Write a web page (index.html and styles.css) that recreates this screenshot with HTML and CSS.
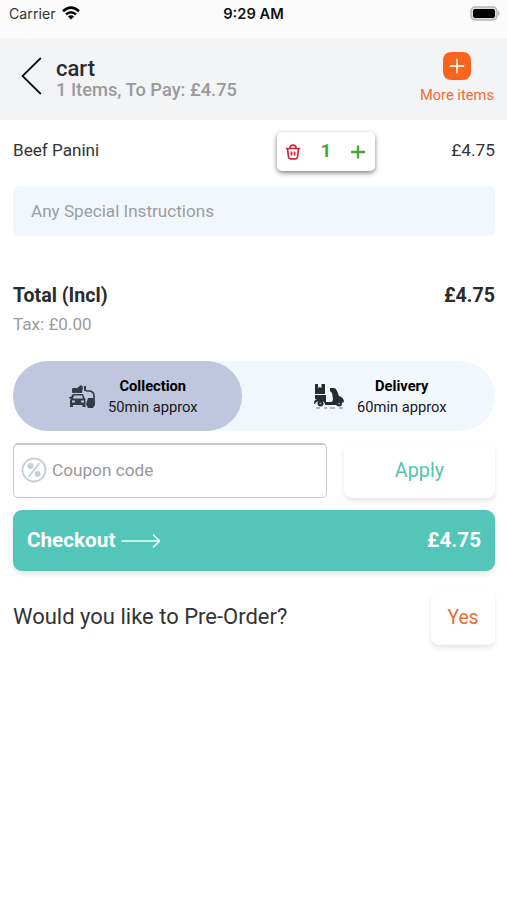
FILE: index.html
```html
<!DOCTYPE html>
<html lang="en">
<head>
<meta charset="utf-8">
<title>cart</title>
<link rel="stylesheet" href="styles.css">
</head>
<body>
<div class="status">
  <div class="carrier"><span>Carrier</span>
    <svg width="18" height="14" viewBox="0 0 18 14" fill="none" stroke="#000" stroke-width="2.5"><path d="M1 5.2Q9-2 17 5.2M4 8.4Q9 4 14 8.4"/><path d="M9 13.6L5.9 10.6Q9 8 12.1 10.6Z" fill="#000" stroke="none"/></svg>
  </div>
  <div class="clock">9:29 AM</div>
  <svg class="battery" width="31" height="15" viewBox="0 0 31 15"><rect x="1" y="1" width="26" height="13" rx="4" fill="#ddd" stroke="#b5b5b5" stroke-width="1.4"/><rect x="3" y="3" width="22" height="9" rx="2" fill="#000"/><path d="M28.3 5q2.4 2.5 0 5z" fill="#999"/></svg>
</div>
<header class="header">
  <svg class="back" width="22" height="38" viewBox="0 0 22 38" fill="none" stroke="#111" stroke-width="1.8"><path d="M19.8 1L1.5 19L19.8 37"/></svg>
  <div class="heading"><h1>cart</h1><p>1 Items, To Pay: £4.75</p></div>
  <div class="more">
    <svg width="28" height="28" viewBox="0 0 28 28"><rect width="28" height="28" rx="8" fill="#f7641e"/><path d="M14 7.5v13M7.5 14h13" stroke="#ffe9dd" stroke-width="1.8" stroke-linecap="round"/></svg>
    <span>More items</span>
  </div>
</header>
<main>
  <div class="item">
    <span class="item-name">Beef Panini</span>
    <div class="stepper">
      <svg width="16" height="16" viewBox="0 0 16 16" fill="none" stroke="#d32839" stroke-width="1.7" stroke-linejoin="round"><path d="M.8 4.500h14.400M2.500 4.500l1 8.500q.2 1.800 2 1.800h5q1.800 0 2-1.800l1-8.500M4.800 4.200Q5 1.200 8 1.200t3.200 3M6.500 7.500v4M9.500 7.500v4"/></svg>
      <b>1</b>
      <svg width="14" height="14" viewBox="0 0 14 14" stroke="#4da63c" stroke-width="2.400"><path d="M7 .5v13M0 7h14"/></svg>
    </div>
    <span class="item-price">£4.75</span>
  </div>
  <div class="notes">Any Special Instructions</div>
  <div class="total"><span class="total-label">Total (Incl)</span><span>£4.75</span></div>
  <div class="tax">Tax: £0.00</div>
  <div class="modes">
    <div class="mode selected">
      <svg width="27" height="25" viewBox="0 0 27 25"><g fill="#343a49"><rect x="3" y="4" width="5" height="5" rx="1"/><path d="M8 4l4-3 2 2-1 6H8zM15 2h2v5h-2z"/><path fill-rule="evenodd" d="M5 10h8q1 0 1.500 1l1 3 1 1v8h-3v-2H4v2H1v-7l1-1-2-1v-1h2l1-2q.5-1 2-1zM5 11.500l-1 3h10l-1-3zM3 16.500v2h3v-2zM12 16.500v2h3v-2z"/><path d="M19 14h5l2 3v4l-2 3h-5l-2-4z"/></g><path d="M17 7h4q4 1 4 5v5" fill="none" stroke="#343a49" stroke-width="1.600"/></svg>
      <div class="mode-text"><b>Collection</b><span>50min approx</span></div>
    </div>
    <div class="mode">
      <svg width="30" height="25" viewBox="0 0 30 25"><g fill="#272c33"><path d="M1 0h3v4l1.800-1 1.700 1V0H11v10H1zM1 11h11v4H1z"/><path d="M0 20q0-5 4-5h8v3h5q2 0 2-3l-1-6-2-2V4h4q2 0 3 3l2 5q4 1 5 5l-1 2q-2-2-4-1-2 1-2 3H11q0-4-4-4-5 0-6 3z"/><circle cx="6.500" cy="19.500" r="3"/><circle cx="25" cy="19.500" r="3"/></g><g fill="#8d949c"><circle cx="6.500" cy="19.500" r="1"/><circle cx="25" cy="19.500" r="1"/></g><path d="M2 24h4m4 0h3m3 0h5m4 0h4" stroke="#737981" stroke-width="1"/></svg>
      <div class="mode-text"><b>Delivery</b><span>60min approx</span></div>
    </div>
  </div>
  <div class="coupon-row">
    <div class="coupon">
      <svg width="26" height="26" viewBox="0 0 26 26" fill="none" stroke="#c5ced2" stroke-width="1.800"><circle cx="13" cy="13" r="11.500"/><path d="M18.500 6L7.500 20"/><g fill="#c5ced2" stroke="none"><circle cx="9.500" cy="9" r="2.900"/><circle cx="16.500" cy="17" r="2.900"/></g></svg>
      <span>Coupon code</span>
    </div>
    <div class="apply"><span>Apply</span></div>
  </div>
  <div class="checkout">
    <span class="checkout-label">Checkout</span>
    <svg width="40" height="16" viewBox="0 0 40 16" fill="none" stroke="#e8fffc" stroke-width="1.700" stroke-linecap="round" stroke-linejoin="round"><path d="M1 8h37M32.500 2l6 6-6 6"/></svg>
    <span class="checkout-price">£4.75</span>
  </div>
  <div class="preorder"><span class="question">Would you like to Pre-Order?</span><div class="yes"><span>Yes</span></div></div>
</main>
</body>
</html>
```

FILE: styles.css
```css
* { box-sizing: border-box; }
body { margin: 0; background: #fff; font-family: Roboto, sans-serif; color: #333; width: 507px; height: 900px; overflow: hidden; }
svg { display: block; flex: none; }
span, b { white-space: nowrap; }
.status { height: 38px; background: #fbfbfb; display: grid; grid-template-columns: 1fr auto 1fr; align-items: center; padding: 0 6px 11px 9px; color: #111; }
.carrier { display: flex; align-items: center; gap: 6px; font: 14.2px/18px Inter, sans-serif; color: #333; }
.carrier svg { margin-bottom: 2px; }
.clock { font: 600 14.7px/18px Inter, sans-serif; margin-right: 3px; }
.battery { justify-self: end; }
.header { height: 82px; background: #f3f4f6; display: flex; align-items: flex-start; padding: 14px 13px 0 21px; }
.back { margin-top: 5px; }
.heading { margin-left: 13px; flex: 1; padding-top: 5px; }
h1 { margin: 0; font-size: 22px; line-height: 23px; font-weight: 500; color: #2b2b2d; }
.heading p { margin: 0; font-size: 18.3px; line-height: 20px; font-weight: 500; color: #999a9d; }
.more { display: flex; flex-direction: column; align-items: center; color: #f56b32; font-size: 14.7px; line-height: 18px; gap: 6px; }
main { padding: 0 12px 0 13px; }
.item { height: 66px; padding-bottom: 4px; display: grid; grid-template-columns: 264px 98px 1fr; align-items: center; font-size: 17.1px; color: #333; }
.item-name, .item-price { padding-bottom: 2px; }
.stepper { height: 39px; border-radius: 5px; background: #fff; box-shadow: 0 2px 5px rgba(0,0,0,.5); display: flex; align-items: center; justify-content: space-between; padding: 2px 10px 0 8px; color: #4da63c; }
.stepper b { font-size: 19px; font-weight: 700; padding-bottom: 3px; }
.item-price { text-align: right; font-size: 17.3px; }
.notes { height: 50px; line-height: 50px; border-radius: 6px; background: #f2f7fe; padding-left: 18px; font-size: 17.1px; color: #9a9da1; }
.total { margin-top: 48px; display: flex; justify-content: space-between; font-size: 19.6px; line-height: 24px; font-weight: 700; color: #2b2b2d; }
.tax { margin-top: 6px; font-size: 17.1px; line-height: 20px; color: #9b9b9d; }
.modes { margin-top: 27px; height: 70px; border-radius: 35px; background: #f2f7fe; display: grid; grid-template-columns: 229px 1fr; }
.mode { display: flex; align-items: center; gap: 12px; padding-left: 56px; border-radius: 35px; color: #15171c; }
.mode + .mode { padding-left: 72px; gap: 13px; }
.selected { background: #bfc6dd; }
.mode-text { display: flex; flex-direction: column; align-items: center; font-size: 14.7px; line-height: 21px; padding-top: 2px; }
.mode-text b { color: #000; }
.coupon-row { margin-top: 12px; height: 55px; display: grid; grid-template-columns: 314px 151px; justify-content: space-between; }
.coupon { border: 1px solid #ccc; border-top: 2px solid #c8c8c8; border-radius: 5px; display: flex; align-items: center; gap: 5px; padding: 0 0 2px 7px; font-size: 17.2px; color: #98989a; }
.apply, .yes { background: #fff; border-radius: 8px; box-shadow: 0 3px 5px rgba(0,0,0,.1); display: flex; align-items: center; justify-content: center; }
.yes { padding-bottom: 2px; }
.apply { color: #55c4ad; font-size: 19.8px; }
.checkout { margin-top: 12px; height: 61px; border-radius: 9px; background: #53c5b9; box-shadow: 0 3px 5px rgba(0,0,0,.1); display: flex; align-items: center; padding: 0 14px; color: #fff; font-size: 20.7px; font-weight: 700; gap: 6px; }
.checkout-label, .checkout-price { padding-bottom: 2px; }
.checkout-price { margin-left: auto; }
.preorder { margin-top: 20px; height: 54px; display: flex; align-items: center; justify-content: space-between; font-size: 22px; color: #333; }
.question { padding-bottom: 4px; }
.yes { width: 64px; height: 54px; font-size: 19.3px; color: #ef6b37; }
```
